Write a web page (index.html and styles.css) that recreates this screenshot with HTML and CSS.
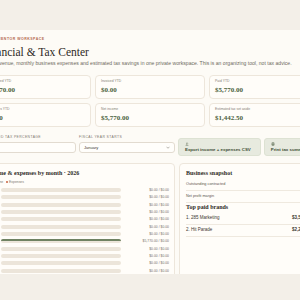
FILE: index.html
```html
<!DOCTYPE html>
<html lang="en">
<head>
    <meta charset="UTF-8">
    <meta name="viewport" content="width=device-width, initial-scale=1.0">
    <title>Financial &amp; Tax Center</title>
    <link rel="stylesheet" href="styles.css">
</head>
<body>
    <div class="topbar"></div>
    <main class="sheet">
        <div class="wrap">
            <p class="eyebrow">Brand mentor workspace</p>
            <h1>Financial &amp; Tax Center</h1>
            <p class="lead">Track revenue, monthly business expenses and estimated tax savings in one private workspace. This is an organizing tool, not tax advice.</p>

            <section class="stats">
                <div class="stat"><span class="stat-label">Contracted YTD</span><span class="stat-value">$5,770.00</span></div>
                <div class="stat"><span class="stat-label">Invoiced YTD</span><span class="stat-value">$0.00</span></div>
                <div class="stat"><span class="stat-label">Paid YTD</span><span class="stat-value">$5,770.00</span></div>
                <div class="stat"><span class="stat-label">Expenses YTD</span><span class="stat-value">$0.00</span></div>
                <div class="stat"><span class="stat-label">Net income</span><span class="stat-value">$5,770.00</span></div>
                <div class="stat"><span class="stat-label">Estimated tax set aside</span><span class="stat-value">$1,442.50</span></div>
            </section>

            <section class="controls">
                <div class="field">
                    <span class="field-label">Estimated tax percentage</span>
                    <div class="input">25</div>
                </div>
                <div class="field">
                    <span class="field-label">Fiscal year starts</span>
                    <div class="input select">
                        <span>January</span>
                        <svg width="4" height="3" viewBox="0 0 8 5"><path d="M1 1l3 3 3-3" fill="none" stroke="#8a847a" stroke-width="1.2"/></svg>
                    </div>
                </div>
                <button class="btn">
                    <svg width="4" height="4" viewBox="0 0 10 10"><path d="M5 1v5M3 4l2 2 2-2M1.5 8.5h7" fill="none" stroke="#4a5a3e" stroke-width="1.1"/></svg>
                    <span>Export income + expenses CSV</span>
                </button>
                <button class="btn">
                    <svg width="4" height="4" viewBox="0 0 10 10"><path d="M3 3.5V1h4v2.5M2 3.5h6v3.5H2zM3 6h4v3H3z" fill="none" stroke="#4a5a3e" stroke-width="1"/></svg>
                    <span>Print tax summary</span>
                </button>
            </section>

            <section class="panels">
                <div class="card chart">
                    <h2 class="card-title">Income &amp; expenses by month · 2026</h2>
                    <div class="legend">
                        <span class="dot dot-income"></span>Income
                        <span class="dot dot-expense"></span>Expenses
                    </div>
                    <div class="rows" id="rows"></div>
                </div>

                <div class="card snapshot">
                    <h2 class="card-title">Business snapshot</h2>
                    <div class="snap-row first"><span>Outstanding contracted</span><b>$0.00</b></div>
                    <div class="snap-row"><span>Net profit margin</span><b>100%</b></div>
                    <h3 class="card-title sub">Top paid brands</h3>
                    <div class="brand-row"><span>1. 285 Marketing</span><b>$3,520.00</b></div>
                    <div class="brand-row"><span>2. Hit Parade</span><b>$2,250.00</b></div>
                </div>
            </section>
        </div>
    </main>

    <script>
const months = ['Jan','Feb','Mar','Apr','May','Jun','Jul','Aug','Sep','Oct','Nov','Dec'];
const income = [0,0,0,0,0,0,0,5770,0,0,0,0];
const expenses = [0,0,0,0,0,0,0,0,0,0,0,0];
const rows = document.getElementById('rows');
const max = Math.max(...income, ...expenses, 1);

function money(n) {
    return '$' + n.toLocaleString('en-US', { minimumFractionDigits: 2, maximumFractionDigits: 2 });
}

months.forEach((m, i) => {
    const row = document.createElement('div');
    row.className = 'row';
    row.innerHTML = `
        <span class="month">${m}</span>
        <div class="track">
            <div class="bar bar-income" style="width: ${income[i] / max * 100}%"></div>
            <div class="bar bar-expense" style="width: ${expenses[i] / max * 100}%"></div>
        </div>
        <span class="amount">${money(income[i])} / ${money(expenses[i])}</span>
    `;
    rows.appendChild(row);
});
    </script>
</body>
</html>
```

FILE: styles.css
```css
body {
    margin: 0;
    background: #f3efe8;
    font-family: "Liberation Sans", Arial, sans-serif;
    overflow: hidden;
}

.topbar {
    height: 30px;
}

.sheet {
    height: 244px;
    background: #fdfbf6;
    overflow: hidden;
}

.wrap {
    margin-left: -19px;
    width: 338px;
    padding-top: 6px;
}

.eyebrow {
    margin: 0;
    font-size: 3.5px;
    line-height: 6px;
    letter-spacing: 0.5px;
    text-transform: uppercase;
    font-weight: 700;
    color: #b4694f;
}

h1 {
    margin: 4px 0 0;
    font: 400 11.5px/12px "Liberation Serif", serif;
    color: #2e2a25;
}

.lead {
    margin: 2.5px 0 0;
    font-size: 5.1px;
    line-height: 5px;
    color: #6e6960;
    white-space: nowrap;
}

/* stat cards */
.stats {
    margin-top: 9.5px;
    display: grid;
    grid-template-columns: repeat(3, 110px);
    gap: 4px;
}

.stat {
    display: flex;
    flex-direction: column;
    gap: 3px;
    padding: 3px 5px;
    border: 1px solid #ede6db;
    border-radius: 4px;
    background: #fffdf9;
}

.stat-label {
    font-size: 3.4px;
    line-height: 4px;
    color: #857f76;
}

.stat-value {
    font: 700 7px/9px "Liberation Serif", serif;
    color: #4b6140;
}

/* controls */
.controls {
    margin-top: 8px;
    display: grid;
    grid-template-columns: 95px 96px auto auto;
    gap: 3px;
    align-items: start;
}

.field-label {
    display: block;
    font-size: 3.4px;
    line-height: 4px;
    letter-spacing: 0.4px;
    text-transform: uppercase;
    color: #7e786f;
}

.input {
    margin-top: 3px;
    height: 11px;
    box-sizing: border-box;
    padding: 0 4px;
    border: 1px solid #e2dbd0;
    border-radius: 3px;
    background: #fffefb;
    font-size: 4px;
    line-height: 9px;
    color: #3b372f;
}

.select {
    display: flex;
    justify-content: space-between;
    align-items: center;
}

.btn {
    margin-top: 3px;
    height: 18px;
    box-sizing: border-box;
    padding: 0 6px;
    display: flex;
    flex-direction: column;
    align-items: flex-start;
    justify-content: center;
    gap: 1px;
    border: 1px solid #dde2d3;
    border-radius: 3px;
    background: #e7eadf;
    font-family: "Liberation Sans", Arial, sans-serif;
    font-size: 4.4px;
    font-weight: 700;
    color: #3e4d34;
    white-space: nowrap;
}

/* panels */
.panels {
    margin-top: 7px;
    display: grid;
    grid-template-columns: 194px 140px;
    gap: 4px;
    align-items: start;
}

.card {
    padding: 5px;
    border: 1px solid #ede6db;
    border-radius: 4px;
    background: #fffdf9;
}

.snapshot {
    padding: 5px 6px;
    min-height: 120px;
}

.card-title {
    margin: 0;
    font: 700 6px/8px "Liberation Serif", serif;
    color: #2e2a25;
}

.legend {
    margin-top: 2.5px;
    font-size: 3.4px;
    line-height: 5px;
    color: #7e786f;
}

.dot {
    display: inline-block;
    width: 2px;
    height: 2px;
    margin: 0 1px 0 2px;
    border-radius: 1px;
}

.dot-income {
    background: #6f8262;
}

.dot-expense {
    background: #c8603f;
}

.rows {
    margin-top: 1.8px;
}

.row {
    display: grid;
    grid-template-columns: 10px 1fr 44px;
    gap: 4px;
    align-items: center;
    height: 7.35px;
}

.month {
    font-size: 3.4px;
    color: #7e786f;
}

.track {
    height: 4px;
    border-radius: 2px;
    background: #ece5da;
    overflow: hidden;
}

.bar {
    height: 2px;
}

.bar-income {
    background: #6f8262;
}

.bar-expense {
    background: #c8603f;
}

.amount {
    font-size: 3.4px;
    text-align: right;
    color: #77716a;
    white-space: nowrap;
}

.snap-row,
.brand-row {
    display: flex;
    justify-content: space-between;
    border-bottom: 1px solid #efe9df;
    color: #5d584f;
}

.snap-row {
    padding: 3px 0;
    font-size: 3.8px;
    line-height: 5px;
}

.snap-row.first {
    margin-top: 1.5px;
}

.brand-row {
    padding: 2.5px 0;
    font-size: 4.5px;
    line-height: 6px;
    color: #3b372f;
}

.sub {
    margin-bottom: 2px;
}
```
